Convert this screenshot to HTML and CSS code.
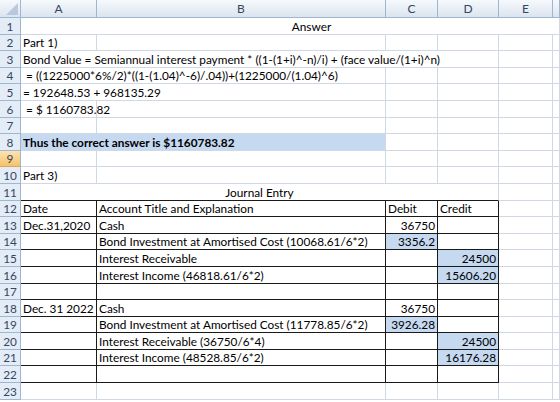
FILE: index.html
```html
<!DOCTYPE html>
<html lang="en">
<head>
  <meta charset="UTF-8">
  <title>Answer</title>
  <link rel="stylesheet" href="styles.css">
</head>
<body>
  <div class="sheet">
    <div class="row head">
      <div class="corner"><span class="tri"></span></div>
      <div class="col">A</div>
      <div class="col">B</div>
      <div class="col">C</div>
      <div class="col">D</div>
      <div class="col">E</div>
      <div class="col"></div>
    </div>

    <div class="row">
      <div class="num">1</div>
      <div class="cell span-af title">Answer</div>
    </div>
    <div class="row">
      <div class="num">2</div>
      <div class="cell">Part 1)</div>
      <div class="cell"></div><div class="cell"></div><div class="cell"></div><div class="cell"></div><div class="cell"></div>
    </div>
    <div class="row">
      <div class="num">3</div>
      <div class="cell span-ad">Bond Value = Semiannual interest payment * ((1-(1+i)^-n)/i) + (face value/(1+i)^n)</div>
      <div class="cell"></div><div class="cell"></div>
    </div>
    <div class="row">
      <div class="num">4</div>
      <div class="cell span-ab">&nbsp;= ((1225000*6%/2)*((1-(1.04)^-6)/.04))+(1225000/(1.04)^6)</div>
      <div class="cell"></div><div class="cell"></div><div class="cell"></div><div class="cell"></div>
    </div>
    <div class="row">
      <div class="num">5</div>
      <div class="cell span-ab">= 192648.53 + 968135.29</div>
      <div class="cell"></div><div class="cell"></div><div class="cell"></div><div class="cell"></div>
    </div>
    <div class="row">
      <div class="num">6</div>
      <div class="cell">&nbsp;= $ 1160783.82</div>
      <div class="cell"></div><div class="cell"></div><div class="cell"></div><div class="cell"></div><div class="cell"></div>
    </div>
    <div class="row">
      <div class="num">7</div>
      <div class="cell"></div><div class="cell"></div><div class="cell"></div><div class="cell"></div><div class="cell"></div><div class="cell"></div>
    </div>
    <div class="row">
      <div class="num">8</div>
      <div class="cell span-ab fill bold">Thus the correct answer is $1160783.82</div>
      <div class="cell"></div><div class="cell"></div><div class="cell"></div><div class="cell"></div>
    </div>
    <div class="row">
      <div class="num active">9</div>
      <div class="cell"></div><div class="cell"></div><div class="cell"></div><div class="cell"></div><div class="cell"></div><div class="cell"></div>
    </div>
    <div class="row">
      <div class="num">10</div>
      <div class="cell">Part 3)</div>
      <div class="cell"></div><div class="cell"></div><div class="cell"></div><div class="cell"></div><div class="cell"></div>
    </div>
    <div class="row">
      <div class="num">11</div>
      <div class="cell span-ad center edge-b">Journal Entry</div>
      <div class="cell"></div><div class="cell"></div>
    </div>

    <!-- journal table -->
    <div class="row">
      <div class="num">12</div>
      <div class="cell t">Date</div>
      <div class="cell t">Account Title and Explanation</div>
      <div class="cell t">Debit</div>
      <div class="cell t">Credit</div>
      <div class="cell"></div><div class="cell"></div>
    </div>
    <div class="row">
      <div class="num">13</div>
      <div class="cell t">Dec.31,2020</div>
      <div class="cell t">Cash</div>
      <div class="cell t amt">36750</div>
      <div class="cell t"></div>
      <div class="cell"></div><div class="cell"></div>
    </div>
    <div class="row">
      <div class="num">14</div>
      <div class="cell t"></div>
      <div class="cell t">Bond Investment at Amortised Cost (10068.61/6*2)</div>
      <div class="cell t amt fill">3356.2</div>
      <div class="cell t"></div>
      <div class="cell"></div><div class="cell"></div>
    </div>
    <div class="row">
      <div class="num">15</div>
      <div class="cell t"></div>
      <div class="cell t">Interest Receivable</div>
      <div class="cell t"></div>
      <div class="cell t amt fill">24500</div>
      <div class="cell"></div><div class="cell"></div>
    </div>
    <div class="row">
      <div class="num">16</div>
      <div class="cell t"></div>
      <div class="cell t">Interest Income (46818.61/6*2)</div>
      <div class="cell t"></div>
      <div class="cell t amt fill">15606.20</div>
      <div class="cell"></div><div class="cell"></div>
    </div>
    <div class="row">
      <div class="num">17</div>
      <div class="cell t"></div><div class="cell t"></div><div class="cell t"></div><div class="cell t"></div>
      <div class="cell"></div><div class="cell"></div>
    </div>
    <div class="row">
      <div class="num">18</div>
      <div class="cell t">Dec. 31 2022</div>
      <div class="cell t">Cash</div>
      <div class="cell t amt">36750</div>
      <div class="cell t"></div>
      <div class="cell"></div><div class="cell"></div>
    </div>
    <div class="row">
      <div class="num">19</div>
      <div class="cell t"></div>
      <div class="cell t">Bond Investment at Amortised Cost (11778.85/6*2)</div>
      <div class="cell t amt fill">3926.28</div>
      <div class="cell t"></div>
      <div class="cell"></div><div class="cell"></div>
    </div>
    <div class="row">
      <div class="num">20</div>
      <div class="cell t"></div>
      <div class="cell t">Interest Receivable (36750/6*4)</div>
      <div class="cell t"></div>
      <div class="cell t amt fill">24500</div>
      <div class="cell"></div><div class="cell"></div>
    </div>
    <div class="row">
      <div class="num">21</div>
      <div class="cell t"></div>
      <div class="cell t">Interest Income (48528.85/6*2)</div>
      <div class="cell t"></div>
      <div class="cell t amt fill">16176.28</div>
      <div class="cell"></div><div class="cell"></div>
    </div>
    <div class="row">
      <div class="num">22</div>
      <div class="cell t"></div><div class="cell t"></div><div class="cell t"></div><div class="cell t"></div>
      <div class="cell"></div><div class="cell"></div>
    </div>
    <div class="row">
      <div class="num">23</div>
      <div class="cell"></div><div class="cell"></div><div class="cell"></div><div class="cell"></div><div class="cell"></div><div class="cell"></div>
    </div>
  </div>
</body>
</html>
```

FILE: styles.css
```css
* {
  box-sizing: border-box;
}
body {
  margin: 0;
  background-color: #fff;
  font-family: Lato, "Liberation Sans", sans-serif;
  font-size: 11.8px;
  color: #000;
}
.sheet {
  width: 560px;
  height: 402px;
  overflow: hidden;
}
.row {
  display: grid;
  grid-template-columns: 21px 76px 289px 52px 61px 54px 1fr;
  height: 16.6px;
}
.row.head {
  height: 18px;
}

/* headers */
.corner,
.col {
  background: linear-gradient(#f6f9fc, #dbe4ef);
  border-right: 1px solid #9eb6ce;
  border-bottom: 1px solid #9eb6ce;
}
.corner {
  position: relative;
}
.tri {
  position: absolute;
  right: 2px;
  bottom: 2px;
  width: 0;
  height: 0;
  border-left: 12px solid transparent;
  border-bottom: 12px solid #b9c8da;
}
.col {
  display: flex;
  align-items: center;
  justify-content: center;
  color: #34475f;
  font-size: 12px;
}
.num {
  display: flex;
  align-items: flex-end;
  justify-content: center;
  line-height: 15px;
  background-color: #e4ecf7;
  border-right: 1px solid #9eb6ce;
  border-bottom: 1px solid #9eb6ce;
  color: #34475f;
}
.num.active {
  background: linear-gradient(#fbe3b0, #f4c36c);
  border-bottom-color: #e0a94f;
}

/* cells */
.cell {
  display: flex;
  align-items: flex-end;
  padding: 0 2px;
  line-height: 15px;
  white-space: nowrap;
  border-right: 1px solid #d0d7e5;
  border-bottom: 1px solid #d0d7e5;
}
.span-ab {
  grid-column: span 2;
}
.span-ad {
  grid-column: span 4;
}
.span-af {
  grid-column: span 6;
}
.title {
  justify-content: center;
  padding-left: 45px;
}
.center {
  justify-content: center;
}
.bold {
  font-weight: bold;
}
.fill {
  background-color: #c5d9f1;
}
.edge-b {
  border-bottom-color: #1a1a1a;
}
.t {
  border-right-color: #1a1a1a;
  border-bottom-color: #1a1a1a;
}
.amt {
  justify-content: flex-end;
}
```
